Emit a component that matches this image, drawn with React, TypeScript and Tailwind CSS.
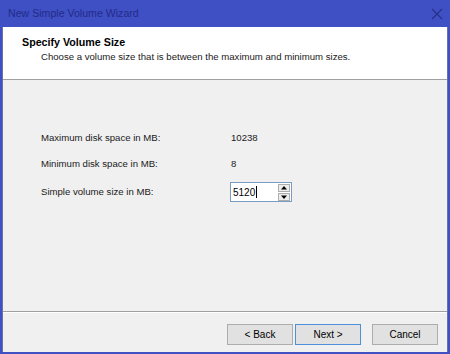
import React from "react";

export default function App() {
  const font = { fontFamily: '"Liberation Sans", Arial, sans-serif' };
  return (
    <div className="w-[450px] h-[354px] bg-[#3f4fc4] flex flex-col text-[9.6px] text-[#1a1a1a]" style={font}>
      {/* Title bar */}
      <div className="h-[27px] flex items-center justify-between pl-[8px] pr-[6px] shrink-0">
        <span className="text-[10.6px] text-[#222c88]">New Simple Volume Wizard</span>
        <svg width="12" height="12" viewBox="0 0 12 12" className="mr-[1px]">
          <path d="M1 1 L11 11 M11 1 L1 11" stroke="#27308a" strokeWidth="1.2" />
        </svg>
      </div>
      {/* Client */}
      <div className="flex-1 mx-[2px] mb-[2px] bg-[#f0f0f0] flex flex-col border-l border-r border-[#6b70a8]">
        <div className="h-[53px] bg-white border-b border-[#a0a0a0] pl-[19px] pt-[8px] shrink-0">
          <div className="font-bold text-[10.7px] text-black leading-[14px]">Specify Volume Size</div>
          <div className="pl-[19px] leading-[14px] mt-[1px]">
            Choose a volume size that is between the maximum and minimum sizes.
          </div>
        </div>
        <div className="flex-1 pl-[38px] pt-[52px]">
          <div className="flex items-center h-[13px]">
            <span className="w-[190px]">Maximum disk space in MB:</span>
            <span>10238</span>
          </div>
          <div className="flex items-center h-[13px] mt-[13px]">
            <span className="w-[190px]">Minimum disk space in MB:</span>
            <span>8</span>
          </div>
          <div className="flex items-center mt-[11px]">
            <span className="w-[189px]">Simple volume size in MB:</span>
            <div className="w-[62px] h-[20px] bg-white border border-[#7a9cc4] flex items-center justify-between pl-[2px] pr-[1px]">
              <span className="flex items-center text-[10px] text-black">
                5120<span className="inline-block w-px h-[12px] bg-black ml-[1px]" />
              </span>
              <div className="flex flex-col gap-[1px]">
                <div className="w-[12px] h-[8px] bg-[#ececec] border border-[#adadad] flex items-center justify-center">
                  <svg width="6" height="4" viewBox="0 0 6 4"><path d="M3 0 L6 3.5 L0 3.5 Z" fill="#000" /></svg>
                </div>
                <div className="w-[12px] h-[8px] bg-[#ececec] border border-[#adadad] flex items-center justify-center">
                  <svg width="6" height="4" viewBox="0 0 6 4"><path d="M0 0.5 L6 0.5 L3 4 Z" fill="#000" /></svg>
                </div>
              </div>
            </div>
          </div>
        </div>
        <div className="shrink-0 border-t border-[#a0a0a0]">
          <div className="border-t border-white h-[40px] flex items-start justify-end pr-[9px] pt-[11px]">
            <button className="w-[66px] h-[21px] bg-[#e1e1e1] border border-[#adadad] text-[10px] text-black">&lt; Back</button>
            <button className="w-[66px] h-[21px] ml-[2px] bg-[#e1e1e1] border border-[#4f8ed8] text-[10px] text-black">Next &gt;</button>
            <button className="w-[66px] h-[21px] ml-[11px] bg-[#e1e1e1] border border-[#adadad] text-[10px] text-black">Cancel</button>
          </div>
        </div>
      </div>
    </div>
  );
}
